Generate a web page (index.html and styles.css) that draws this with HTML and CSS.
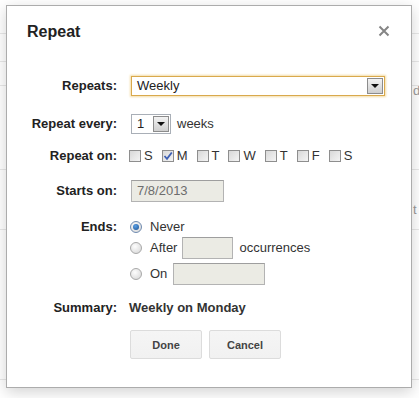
FILE: index.html
```html
<html lang="en">
<head>
    <meta charset="UTF-8"/>
    <meta name="viewport" content="width=device-width, initial-scale=1.0"/>
    <title>Repeat</title>
    <link rel="stylesheet" href="styles.css">
</head>
<body>

<div class="backdrop">
    <div class="back_row r1"></div>
    <div class="back_row r2"></div>
    <div class="back_row r3"><span class="peek">d</span></div>
    <div class="back_row r4"><span class="peek">t</span></div>
    <div class="back_row r5"></div>
    <div class="back_row r6"></div>
</div>

<div class="dialog">
    <div class="dialog_header">
        <span class="dialog_title">Repeat</span>
        <svg class="close" width="12" height="12" viewBox="0 0 12 12">
            <path d="M1.5 1.5 L10.5 10.5 M10.5 1.5 L1.5 10.5" stroke="#858585" stroke-width="2"/>
        </svg>
    </div>

    <div class="row first">
        <span class="label">Repeats:</span>
        <div class="select wide focused">
            <span class="select_value">Weekly</span>
            <span class="arrow"><i></i></span>
        </div>
    </div>

    <div class="row gap_every">
        <span class="label">Repeat every:</span>
        <div class="inline">
            <div class="select small">
                <span class="select_value">1</span>
                <span class="arrow"><i></i></span>
            </div>
            <span class="unit">weeks</span>
        </div>
    </div>

    <div class="row gap_on">
        <span class="label">Repeat on:</span>
        <div class="days">
            <label class="day"><span class="box"></span>S</label>
            <label class="day"><span class="box checked">
                <svg width="10" height="10" viewBox="0 0 10 10"><path d="M1.5 5 L4 7.8 L8.8 1.5" fill="none" stroke="#3d5fb4" stroke-width="1.8"/></svg>
            </span>M</label>
            <label class="day"><span class="box"></span>T</label>
            <label class="day"><span class="box"></span>W</label>
            <label class="day"><span class="box"></span>T</label>
            <label class="day"><span class="box"></span>F</label>
            <label class="day"><span class="box"></span>S</label>
        </div>
    </div>

    <div class="row gap_starts">
        <span class="label">Starts on:</span>
        <div class="text_input starts">7/8/2013</div>
    </div>

    <div class="row top gap_ends">
        <span class="label">Ends:</span>
        <div class="ends">
            <div class="end_option never"><span class="radio selected"></span>Never</div>
            <div class="end_option"><span class="radio"></span>After<span class="text_input count"></span>occurrences</div>
            <div class="end_option on"><span class="radio"></span>On<span class="text_input date"></span></div>
        </div>
    </div>

    <div class="row gap_summary">
        <span class="label">Summary:</span>
        <span class="summary">Weekly on Monday</span>
    </div>

    <div class="row gap_buttons">
        <span></span>
        <div class="buttons">
            <button class="btn">Done</button>
            <button class="btn">Cancel</button>
        </div>
    </div>
</div>

</body>
</html>
```

FILE: styles.css
```css
body {
    margin: 0;
    font-family: 'Liberation Sans', Arial, sans-serif;
    font-size: 13px;
    line-height: 20px;
    color: #333;
    background: #fff;
    width: 419px;
    height: 398px;
    overflow: hidden;
    position: relative;
}

.back_row {
    border-bottom: 1px solid #e8e8e8;
    position: relative;
}

.r1 { height: 33px; }
.r2 { height: 27px; }
.r3 { height: 23px; }
.r4 { height: 83px; }
.r5 { height: 59px; }
.r6 { height: 149px; }

.peek {
    position: absolute;
    left: 413px;
    bottom: -16px;
    color: #9a9a9a;
    font-size: 13px;
}

.r4 .peek {
    bottom: -51px;
}

.dialog {
    position: absolute;
    left: 6px;
    top: 5px;
    width: 404px;
    height: 381px;
    background: #fff;
    border: 1px solid #acacac;
    box-shadow: 0 4px 14px rgba(0, 0, 0, 0.18);
}

.dialog_header {
    display: flex;
    justify-content: space-between;
    align-items: center;
    padding: 16px 21px 0 20px;
    height: 20px;
}

.dialog_title {
    font-size: 16px;
    font-weight: bold;
    color: #222;
}

.close {
    margin-top: -3px;
}

.row {
    display: grid;
    grid-template-columns: 110px auto;
    column-gap: 14px;
    align-items: center;
}

.row.top {
    align-items: start;
}

.first { margin-top: 34px; }
.gap_every { margin-top: 18px; }
.gap_on { margin-top: 12px; }
.gap_starts { margin-top: 14px; }
.gap_ends { margin-top: 15px; }
.gap_summary { margin-top: 13px; }
.gap_buttons { margin-top: 12px; }

.label {
    text-align: right;
    font-weight: bold;
    color: #222;
}

.select {
    display: flex;
    align-items: center;
    justify-content: space-between;
    height: 18px;
    border: 1px solid #a9afb7;
    background: #fff;
    box-sizing: content-box;
}

.select.wide {
    width: 252px;
}

.select.focused {
    border-color: #d9a94c;
    box-shadow: 0 0 2px 1px #f3dca8;
}

.select.small {
    width: 38px;
}

.select_value {
    padding-left: 5px;
    color: #222;
}

.arrow {
    width: 14px;
    height: 14px;
    margin-right: 1px;
    border: 1px solid #8c8c8c;
    background: linear-gradient(#f2f2f2, #cfcfcf);
    display: flex;
    align-items: center;
    justify-content: center;
}

.arrow i {
    width: 0;
    height: 0;
    border-left: 4px solid transparent;
    border-right: 4px solid transparent;
    border-top: 4px solid #111;
}

.inline {
    display: flex;
    align-items: center;
}

.unit {
    margin-left: 6px;
}

.days {
    display: flex;
    margin-left: -2px;
}

.day {
    display: flex;
    align-items: center;
    margin-right: 9px;
    color: #333;
}

.box {
    width: 10px;
    height: 10px;
    border: 1px solid #8e8e8e;
    background: linear-gradient(135deg, #d8d8d8, #f4f4f4);
    margin-right: 3px;
    display: flex;
    align-items: center;
    justify-content: center;
}

.text_input {
    height: 20px;
    border: 1px solid #b3b3b3;
    border-top-color: #9e9e9e;
    background: #ebebe4;
    color: #6d6d6d;
    box-sizing: content-box;
}

.starts {
    width: 86px;
    padding-left: 5px;
    line-height: 20px;
}

.ends {
    display: flex;
    flex-direction: column;
}

.end_option {
    display: flex;
    align-items: center;
    height: 22px;
    color: #333;
}

.end_option.never {
    height: 20px;
}

.end_option.on {
    margin-top: 4px;
}

.radio {
    width: 10px;
    height: 10px;
    border: 1px solid #a8a8a8;
    border-radius: 50%;
    background: radial-gradient(circle at 40% 35%, #fdfdfd, #d4d4d4);
    margin: 0 8px 0 -1px;
    display: flex;
    align-items: center;
    justify-content: center;
}

.radio.selected {
    border-color: #6f8bb0;
}

.radio.selected::after {
    content: "";
    width: 6px;
    height: 6px;
    border-radius: 50%;
    background: radial-gradient(circle at 40% 35%, #5aa0e6, #1a4f8f);
}

.count {
    width: 49px;
    margin: 0 6px 0 5px;
}

.date {
    width: 90px;
    margin-left: 6px;
}

.summary {
    font-weight: bold;
    color: #333;
    margin-left: -2px;
}

.buttons {
    display: flex;
    gap: 7px;
    margin-left: -1px;
}

.btn {
    width: 72px;
    height: 29px;
    font-family: 'Liberation Sans', Arial, sans-serif;
    font-size: 11px;
    font-weight: bold;
    color: #444;
    background: linear-gradient(#f5f5f5, #f1f1f1);
    border: 1px solid #dcdcdc;
    border-radius: 2px;
}
```
